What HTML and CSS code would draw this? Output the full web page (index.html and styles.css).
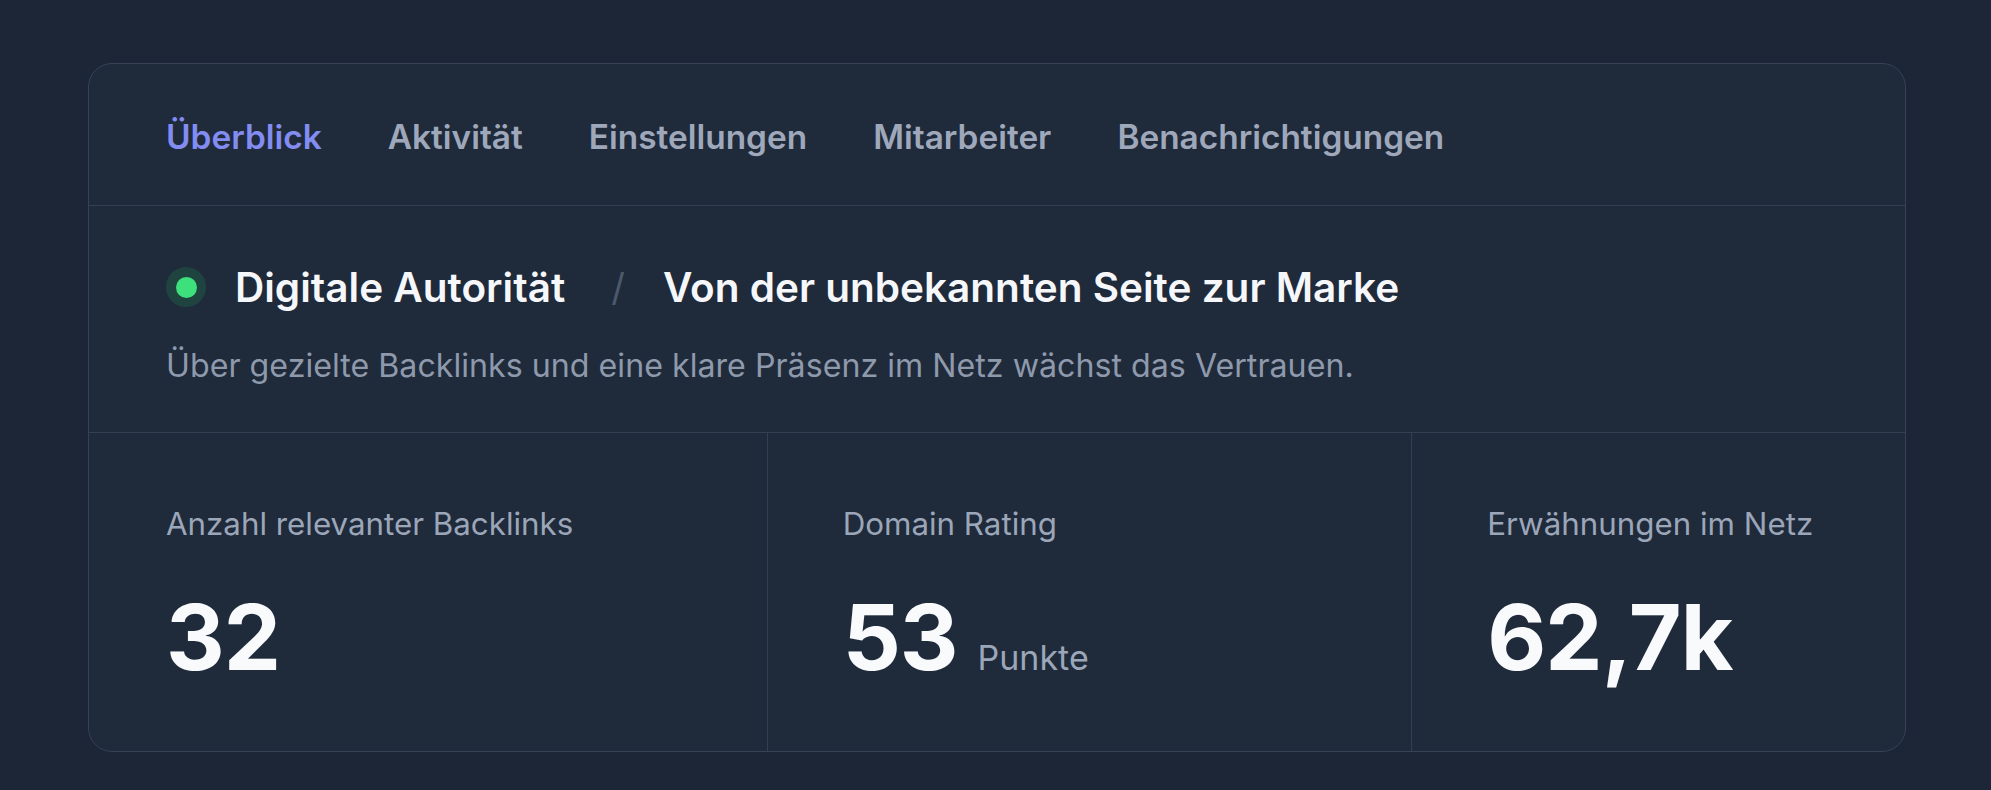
FILE: index.html
```html
<!DOCTYPE html>
<html lang="de">
<head>
    <meta charset="UTF-8">
    <title>Digitale Autorität</title>
    <link rel="stylesheet" href="styles.css">
</head>
<body>
    <div class="card">
        <nav class="tabs">
            <a class="tab active" href="#">Überblick</a>
            <a class="tab" href="#">Aktivität</a>
            <a class="tab" href="#">Einstellungen</a>
            <a class="tab" href="#">Mitarbeiter</a>
            <a class="tab" href="#">Benachrichtigungen</a>
        </nav>

        <div class="intro">
            <div class="title-row">
                <span class="status"><span class="status-dot"></span></span>
                <span class="title">Digitale Autorität</span>
                <span class="sep">/</span>
                <span class="title">Von der unbekannten Seite zur Marke</span>
            </div>
            <p class="desc">Über gezielte Backlinks und eine klare Präsenz im Netz wächst das Vertrauen.</p>
        </div>

        <div class="stats">
            <div class="stat">
                <div class="stat-label">Anzahl relevanter Backlinks</div>
                <div class="stat-value">32</div>
            </div>
            <div class="stat">
                <div class="stat-label">Domain Rating</div>
                <div class="stat-value">53<span class="unit">Punkte</span></div>
            </div>
            <div class="stat">
                <div class="stat-label">Erwähnungen im Netz</div>
                <div class="stat-value">62,7k</div>
            </div>
        </div>
    </div>
</body>
</html>
```

FILE: styles.css
```css
body {
    margin: 0;
    padding: 63px 85px 0 88px;
    background-color: #1c2636;
    font-family: Inter, "Noto Sans", sans-serif;
}
.card {
    background: #1f2a3b;
    border: 1px solid #364256;
    border-radius: 24px;
    overflow: hidden;
}
.tabs {
    display: flex;
    align-items: center;
    gap: 66px;
    height: 142px;
    box-sizing: border-box;
    padding: 5px 77px 0;
    border-bottom: 1px solid #334052;
}
.tab {
    font-size: 33.4px;
    font-weight: 600;
    color: #9ea8ba;
    text-decoration: none;
}
.tab.active {
    color: #838cf1;
}
.intro {
    padding: 57px 77px 45px;
    border-bottom: 1px solid #334052;
}
.title-row {
    display: flex;
    align-items: center;
    height: 48px;
}
.status {
    width: 40px;
    height: 40px;
    border-radius: 50%;
    background-color: #1f4440;
    display: flex;
    align-items: center;
    justify-content: center;
    margin-right: 29px;
}
.status-dot {
    width: 21px;
    height: 21px;
    border-radius: 50%;
    background-color: #3ee07c;
}
.title {
    font-size: 40.5px;
    font-weight: 600;
    color: #f5f7fa;
}
.sep {
    font-size: 38px;
    color: #4c586b;
    margin: 0 38px 0 46px;
}
.desc {
    margin: 34px 0 0;
    font-size: 32.2px;
    line-height: 42px;
    color: #8e99ab;
}
.stats {
    display: grid;
    grid-template-columns: 678fr 645fr 494fr;
}
.stat {
    padding: 72px 75px 64px;
    border-left: 1px solid #334052;
}
.stat:first-child {
    padding-left: 77px;
    border-left: none;
}
.stat-label {
    font-size: 31.3px;
    line-height: 38px;
    color: #9ba6b8;
}
.stat-value {
    margin-top: 44px;
    font-size: 91px;
    line-height: 100px;
    font-weight: 700;
    color: #f8fafc;
    letter-spacing: -1px;
}
.unit {
    font-size: 34px;
    line-height: 1;
    font-weight: 400;
    letter-spacing: 0;
    color: #9ba6b8;
    margin-left: 20px;
}
```
